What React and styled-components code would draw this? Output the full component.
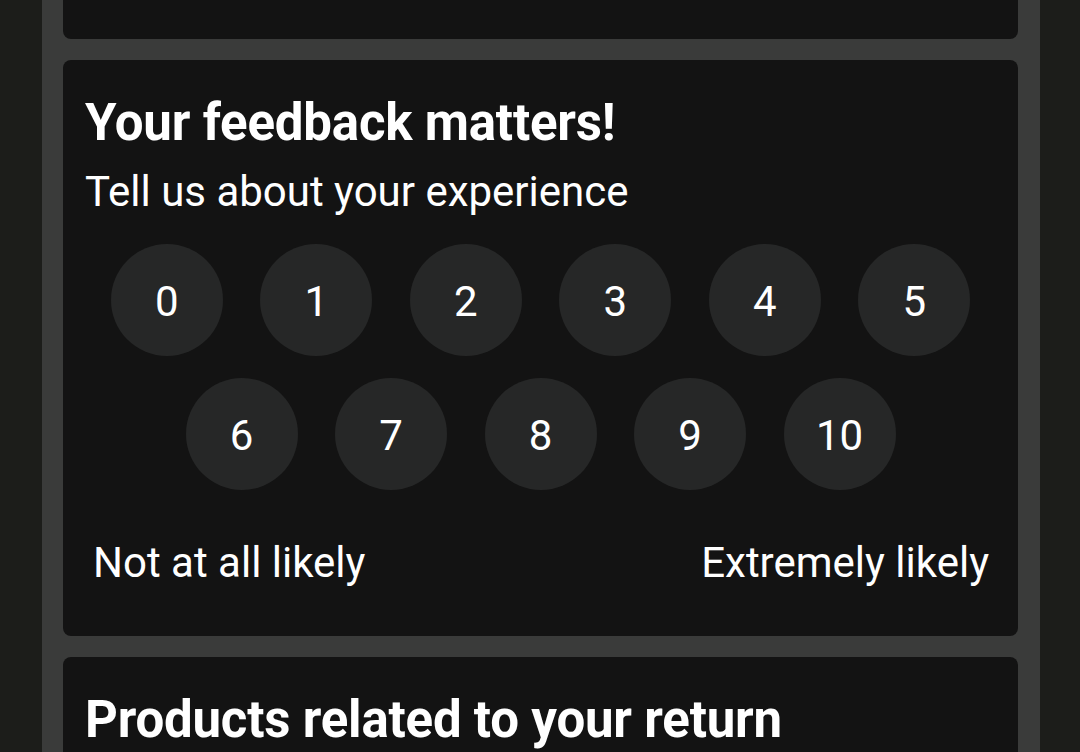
import React from 'react';
import styled, { createGlobalStyle } from 'styled-components';

const GlobalStyle = createGlobalStyle`
  html, body {
    margin: 0;
    padding: 0;
    background: #1c1d1a;
    height: 100%;
    overflow: hidden;
  }
  body {
    font-family: Roboto, "Noto Sans", "Liberation Sans", sans-serif;
    color: #ffffff;
  }
`;

const Column = styled.main`
  width: 998px;
  height: 752px;
  overflow: hidden;
  margin-left: 42px;
  padding: 0 22px 0 21px;
  box-sizing: border-box;
  background: #3a3b3a;
  display: flex;
  flex-direction: column;
  gap: 21px;
`;

const Card = styled.section`
  flex-shrink: 0;
  background: #131313;
  border-radius: ${({ cut }) => (cut ? '0 0 8px 8px' : '8px')};
  padding: ${({ cut }) => (cut ? '0' : '33px 22px 48px')};
  height: ${({ cut }) => (cut ? '39px' : 'auto')};
  box-sizing: border-box;
`;

const Title = styled.h2`
  margin: 0;
  font-size: 51px;
  font-weight: 700;
  line-height: 60px;
  letter-spacing: -0.2px;
`;

const Subtitle = styled.p`
  margin: 14px 0 0;
  font-size: 42px;
  font-weight: 400;
  line-height: 50px;
`;

const Scale = styled.div`
  display: flex;
  flex-wrap: wrap;
  justify-content: center;
  column-gap: 37.5px;
  row-gap: 22px;
  margin: 27px 25px 0;
`;

const Score = styled.button`
  width: 112px;
  height: 112px;
  border-radius: 50%;
  border: none;
  padding: 3px 0 0;
  background: #262727;
  color: #ffffff;
  font-family: inherit;
  font-size: 42px;
  font-weight: 400;
  display: flex;
  align-items: center;
  justify-content: center;
  cursor: pointer;
`;

const Legend = styled.div`
  display: flex;
  justify-content: space-between;
  padding: 48px 7px 0 8px;
  font-size: 42px;
  line-height: 50px;
`;

const scores = Array.from({ length: 11 }, (_, i) => i);

export default function App() {
  return (
    <>
      <GlobalStyle />
      <Column>
        <Card cut />
        <Card>
          <Title>Your feedback matters!</Title>
          <Subtitle>Tell us about your experience</Subtitle>
          <Scale>
            {scores.map((n) => (
              <Score key={n}>{n}</Score>
            ))}
          </Scale>
          <Legend>
            <span>Not at all likely</span>
            <span>Extremely likely</span>
          </Legend>
        </Card>
        <Card>
          <Title>Products related to your return</Title>
        </Card>
      </Column>
    </>
  );
}
